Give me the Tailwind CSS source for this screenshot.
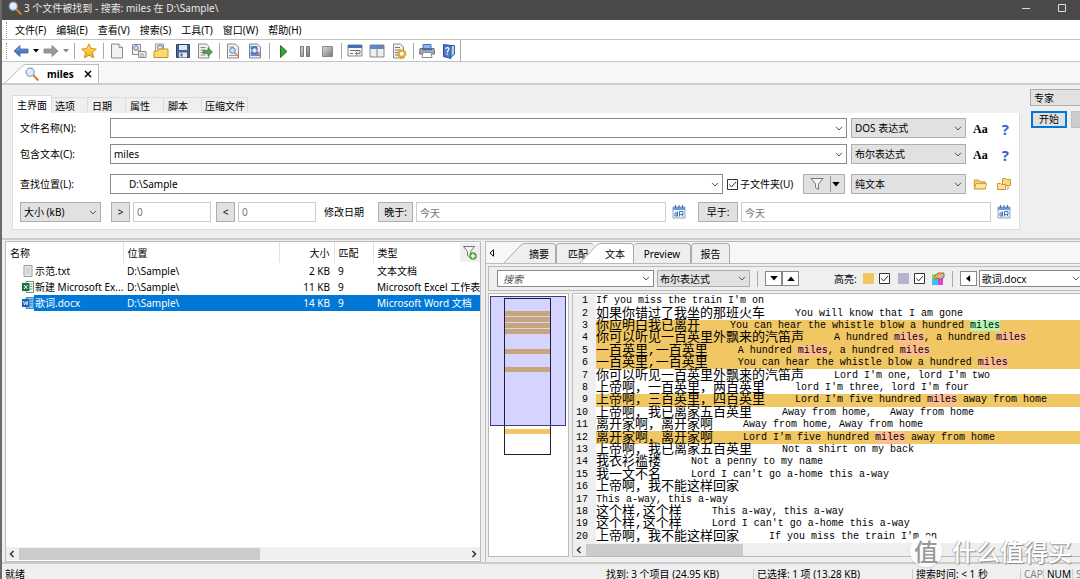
<!DOCTYPE html>
<html lang="zh-CN">
<head>
    <meta charset="UTF-8">
    <meta name="viewport" content="width=device-width, initial-scale=1.0">
    <title>搜索: miles</title>
    <script src="https://cdn.jsdelivr.net/npm/@tailwindcss/browser@4"></script>
</head>
<body class="h-screen overflow-hidden flex bg-[#efefef] text-black text-[10px] leading-[14px] font-['Noto_Sans','Noto_Sans_CJK_SC',sans-serif]">
    <!-- Shared icons -->
    <svg class="absolute size-0">
        <defs>
            <linearGradient id="blue" x1="0" y1="0" x2="0" y2="1"><stop offset="0" stop-color="#7da7e0"/><stop offset="1" stop-color="#2a57a8"/></linearGradient>
            <linearGradient id="gray" x1="0" y1="0" x2="1" y2="1"><stop offset="0" stop-color="#ddd"/><stop offset="1" stop-color="#777"/></linearGradient>
            <linearGradient id="gold" x1="0" y1="0" x2="0" y2="1"><stop offset="0" stop-color="#ffe96b"/><stop offset="1" stop-color="#f5a81c"/></linearGradient>
        </defs>
        <symbol id="chevron" viewBox="0 0 8 5"><path d="M1 .8 4 4 7 .8" fill="none" stroke="#555"/></symbol>
        <symbol id="down" viewBox="0 0 6 4"><path d="M0 0h6L3 3.6z"/></symbol>
        <symbol id="lens" viewBox="0 0 16 16">
            <path d="m9.5 9.5 5 5" stroke="#e07a2c" stroke-width="2.6" stroke-linecap="round"/>
            <circle cx="6" cy="6" r="4.6" fill="#dcebfb" stroke="#8a9fc8" stroke-width="1.4"/>
            <path d="M3.5 5.5a2.6 2.6 0 0 1 2.6-2.3" fill="none" stroke="#fff" stroke-width="1.2"/>
        </symbol>
        <symbol id="page" viewBox="0 0 16 16"><path d="M2.5 1h7.5l3.5 3.5V15h-11z" fill="#f1f1f1" stroke="#8b8b8b"/><path d="M10 1v3.5h3.5" fill="#fff" stroke="#8b8b8b"/></symbol>
        <symbol id="folder" viewBox="0 0 16 16"><path d="M1.5 13.5v-10h5l1.5 2h6v8z" fill="#f7cf62" stroke="#c08a28"/><path d="M1.5 13.5 3.5 7.5h12l-1.5 6z" fill="#fde9a2" stroke="#c99838"/></symbol>
        <symbol id="calendar" viewBox="0 0 14 14">
            <path d="M1 2h12v11H1z" fill="#eef4fb" stroke="#8ea6c4"/><path d="M1 2h12v3H1z" fill="#6c9bd8"/>
            <path d="M3.5 0v3M7 0v3M10.5 0v3" stroke="#3e6fb3"/><path d="M3 8h2v3H3zM5.500 6.500v5M7.500 11.500v-5H11v3H7.500M10 9.500l1 2" fill="none" stroke="#4b78b8"/>
        </symbol>
        <symbol id="funnel" viewBox="0 0 14 14"><path d="M1 1.500h12L8.500 7v5.500l-3-2V7z" fill="#f4f4f4" stroke="#777"/></symbol>
    </svg>

    <div class="w-0.5 shrink-0 bg-[#6a6a6a]"></div>

    <div class="flex-1 min-w-0 flex flex-col">
        <!-- Title bar -->
        <header class="h-5 shrink-0 bg-[#4c4a48] text-[#e8e8e8] flex items-center pl-1.5 pb-1">
            <svg class="size-3.5 mr-0.5"><use href="#lens"/></svg>
            <h1 class="flex-1">3 个文件被找到 - 搜索: miles 在 D:\Sample\</h1>
            <button aria-label="最小化" class="w-9 flex justify-center"><svg class="size-2.5" viewBox="0 0 10 10"><path d="M1 5.500h8" stroke="#ddd"/></svg></button>
            <button aria-label="最大化" class="w-9 flex justify-center"><svg class="size-2.5" viewBox="0 0 10 10"><path d="M1.500 1.500h7v7h-7z" fill="none" stroke="#ddd"/></svg></button>
        </header>

        <!-- Menu -->
        <nav class="h-5 shrink-0 bg-white border-b border-[#c4c4c4] flex items-center pl-1">
            <span class="h-4 border-l border-dotted border-[#999] mr-2"></span>
            <div class="flex gap-2.5">
                <button>文件(F)</button>
                <button>编辑(E)</button>
                <button>查看(V)</button>
                <button>搜索(S)</button>
                <button>工具(T)</button>
                <button>窗口(W)</button>
                <button>帮助(H)</button>
            </div>
        </nav>

        <!-- Toolbar -->
        <div class="h-[22px] shrink-0 bg-white border-b border-[#c4c4c4] flex">
            <div class="flex items-center pl-1 border-r border-[#aaa] [&>button]:flex [&>button]:justify-center [&>button]:w-[22px] [&_svg]:size-4">
                <span class="h-4 border-l border-dotted border-[#999] mr-[3px]"></span>
                <button aria-label="后退"><svg viewBox="0 0 16 16"><path d="M1 8 7 2.500V6h8v4H7v3.500z" fill="url(#blue)" stroke="#3a66ad" stroke-width=".8"/></svg></button>
                <span class="w-2 flex justify-center"><svg class="size-1.5!"><use href="#down"/></svg></span>
                <button aria-label="前进"><svg viewBox="0 0 16 16"><path d="M15 8 9 2.500V6H1v4h8v3.500z" fill="#999" stroke="#808080" stroke-width=".8"/></svg></button>
                <span class="w-2 flex justify-center"><svg class="size-1.5!" fill="#888"><use href="#down"/></svg></span>
                <span class="w-2 flex justify-center"><i class="h-4 border-l border-[#aaa]"></i></span>
                <button aria-label="收藏"><svg viewBox="0 0 16 16"><path d="m8 .8 2.200 4.700 5.100.6-3.800 3.500 1 5.200L8 12.200l-4.500 2.600 1-5.200L.7 6.100l5.100-.6z" fill="url(#gold)" stroke="#cf8412" stroke-width=".9"/></svg></button>
                <span class="w-1.5 flex justify-center"><i class="h-4 border-l border-[#aaa]"></i></span>
                <button aria-label="新建"><svg><use href="#page"/></svg></button>
                <button aria-label="新建搜索"><svg viewBox="0 0 16 16"><path d="M1.500 1.500h8v10h-8z" fill="#f4f4f4" stroke="#888"/><circle cx="5" cy="5" r="2.300" fill="#cfe2fa" stroke="#5c80b8"/><path d="m7 7 2 2" stroke="#e07a2c" stroke-width="1.500"/><path d="M7.500 8.500h7.500v6H7.500z" fill="#eee" stroke="#888"/><path d="M9 11h4M9 13h4" stroke="#999"/></svg></button>
                <button aria-label="打开"><svg viewBox="0 0 16 16"><path d="M2.500 1h8v9h-8z" fill="#eee" stroke="#999"/><circle cx="7" cy="4.500" r="2.500" fill="#cfe2fa" stroke="#5c80b8"/><path d="M1 14.500V8h4l1-2h9v8.500z" fill="#fbd970" stroke="#cc9427"/></svg></button>
                <button aria-label="保存"><svg viewBox="0 0 16 16"><path d="M1.500 1.500h13v13h-13z" fill="#4b6591" stroke="#2f456d"/><path d="M4 2h8v5H4z" fill="#dbe7f7"/><path d="M4 9.500h8v5H4z" fill="#e8e8e8"/><path d="M5.500 10.500h2v3h-2z" fill="#4b6591"/></svg></button>
                <button aria-label="导出"><svg viewBox="0 0 16 16"><path d="M1.500 1h8l2.500 2.500V15H1.500z" fill="#f3f3f3" stroke="#888"/><path d="M3.500 4.500h5M3.500 7h5M3.500 9.500h3M3.500 12h5" stroke="#888"/><path d="M6 7.500h5V4.800L15.500 9 11 13.200v-2.700H6z" fill="#4ea64a" stroke="#2f7a30" stroke-width=".7"/></svg></button>
                <span class="w-1.5 flex justify-center"><i class="h-4 border-l border-[#aaa]"></i></span>
                <button aria-label="查看文件"><svg viewBox="0 0 16 16"><path d="M2.500 1h8l3 3v11h-11z" fill="#f3f3f3" stroke="#888"/><path d="M4 4h5M4 12.500h7" stroke="#999"/><circle cx="7.500" cy="7.500" r="2.800" fill="#cfe2fa" stroke="#4f76b5"/><path d="m10 10 3 3" stroke="#e07a2c" stroke-width="1.600"/></svg></button>
                <button aria-label="查找文本"><svg viewBox="0 0 16 16"><path d="M2.500 1h8l3 3v11h-11z" fill="#e9eef6" stroke="#7b8798"/><path d="M3.500 3h7v3h-7zM3.500 9h9v4h-9z" fill="#5d88cc"/><circle cx="7.500" cy="7.500" r="2.800" fill="#dcebfb" stroke="#2c559b"/><path d="m10 10 3 3" stroke="#e07a2c" stroke-width="1.600"/></svg></button>
                <span class="w-1.5 flex justify-center"><i class="h-4 border-l border-[#aaa]"></i></span>
                <button aria-label="开始搜索"><svg viewBox="0 0 16 16"><path d="M5.500 2.500 12 8.500l-6.500 6z" fill="#3fa33a" stroke="#23771f"/></svg></button>
                <button aria-label="暂停"><svg viewBox="0 0 16 16"><path d="M3.500 3.500h3v10h-3zM9.500 3.500h3v10h-3z" fill="url(#gray)" stroke="#777"/></svg></button>
                <button aria-label="停止"><svg viewBox="0 0 16 16"><path d="M3.500 3.500h10v10h-10z" fill="url(#gray)" stroke="#888"/></svg></button>
                <span class="w-1.5 flex justify-center"><i class="h-4 border-l border-[#aaa]"></i></span>
                <button aria-label="自动换行"><svg viewBox="0 0 16 16"><path d="M1 2h14v11H1z" fill="#f6f6f6" stroke="#888"/><path d="M1 2h14v3H1z" fill="#4170b8"/><path d="M3 7.500h10M3 10.500h3M13 7.500v3H9m1.500-2L8.500 10.500l2 2" fill="none" stroke="#777"/></svg></button>
                <button aria-label="布局"><svg viewBox="0 0 16 16"><path d="M1 2h14v12H1z" fill="#eee" stroke="#888"/><path d="M1 2h14v4H1z" fill="#5a87cc"/><path d="M12 3h2v1.500h-2z" fill="#e0502c"/><path d="M8 6v8" stroke="#888"/></svg></button>
                <button aria-label="设置"><svg viewBox="0 0 16 16"><path d="M2.500 1h7l3 3v11h-10z" fill="#f3f3f3" stroke="#888"/><path d="M4 4.500h5M4 7h5M4 9.500h3M4 12h3" stroke="#777"/><circle cx="10.800" cy="10.800" r="3" fill="#fff" stroke="#e3aa25" stroke-width="2"/><circle cx="10.800" cy="10.800" r="4.400" fill="none" stroke="#cc9018" stroke-dasharray="1.700 1.750"/></svg></button>
                <span class="w-1.5 flex justify-center"><i class="h-4 border-l border-[#aaa]"></i></span>
                <button aria-label="打印"><svg viewBox="0 0 16 16"><path d="M4 1.500h8V6H4z" fill="#8fb5ec" stroke="#4a72b0"/><path d="M1 5.500h14l.5 5.500H.5z" fill="#a9adb4" stroke="#6d6d6d"/><path d="M3 6.500h10" stroke="#3867b5" stroke-width="1.500"/><path d="M4 9.500h8l1 5H3z" fill="#fff" stroke="#888"/></svg></button>
                <button aria-label="帮助"><svg viewBox="0 0 16 16"><path d="M9 2.500h4.500v9L9 14.500z" fill="#b9cbe8" stroke="#3e64a8"/><path d="M2.500 1.500 10 2.500v13l-7.500-2z" fill="#4d7ccb" stroke="#294f94"/><path d="M4.800 6.300c0-2.600 3.600-2 3 .3C7.500 7.700 6.300 7.800 6.300 9.500m0 1v1.300" fill="none" stroke="#fff" stroke-width="1.200"/></svg></button>
            </div>
        </div>

        <!-- Search tabs -->
        <div class="h-[23px] shrink-0 bg-[#f7f7f7] border-b-2 border-[#ccc] flex items-end pl-[3px]">
            <svg class="w-5 h-[19px]" viewBox="0 0 20 19"><path d="M0 19 18 1.500 20 .5V19z" fill="#fff"/><path d="M0 19 18 1.500 20 .5" fill="none" stroke="#bbb"/></svg>
            <button class="h-[19px] bg-white border-t border-r border-[#bbb] flex items-center font-bold pr-1.5">
                <svg class="size-3.5 mr-2"><use href="#lens"/></svg>miles
                <svg class="size-2 ml-2.5" viewBox="0 0 8 8"><path d="m1 1 6 6M7 1 1 7" stroke="#000" stroke-width="1.500"/></svg>
            </button>
        </div>

        <!-- Criteria -->
        <section class="shrink-0 flex pl-2.5 pt-1 pb-2">
            <div class="flex-1 min-w-0 pt-1.5">
                <div class="flex items-end">
                    <button class="h-[18px] w-10 bg-white border border-b-0 border-[#ddd]">主界面</button>
                    <button class="h-4 w-9 pl-[3px] text-left border-t border-r border-[#ddd]">选项</button>
                    <button class="h-4 w-[38px] pl-1 text-left border-t border-r border-[#ddd]">日期</button>
                    <button class="h-4 w-[38px] pl-1 text-left border-t border-r border-[#ddd]">属性</button>
                    <button class="h-4 w-[38px] pl-1 text-left border-t border-r border-[#ddd]">脚本</button>
                    <button class="h-4 w-[46px] pl-[3px] text-left border-t border-r border-[#ddd] whitespace-nowrap">压缩文件</button>
                </div>
                <form class="bg-white border border-t-0 border-[#ddd] flex flex-col pl-[7px] pr-2 pt-[5px] pb-[7px]">
                    <div class="flex items-center h-5 mb-1.5">
                        <label for="name" class="w-[90px]">文件名称(N):</label>
                        <div class="flex-1 h-5 flex items-center border border-[#8a8a8a] pr-[3px]">
                            <input id="name" type="text" class="flex-1 min-w-0 px-[3px] outline-none"><svg class="w-2 h-[5px]"><use href="#chevron"/></svg>
                        </div>
                        <div class="w-[115px] h-5 ml-1 flex items-center bg-[#e1e1e1] border border-[#adadad] pr-[3px]">
                            <select aria-label="名称表达式" class="flex-1 appearance-none pl-[3px] outline-none"><option>DOS 表达式</option></select><svg class="w-2 h-[5px]"><use href="#chevron"/></svg>
                        </div>
                        <div class="w-[45px] flex items-center justify-between pl-[7px] pr-0.5 pt-0.5">
                            <button type="button" class="font-['Liberation_Serif',serif] font-bold text-[12px]">Aa</button>
                            <button type="button" class="font-['Open_Sans',sans-serif] font-bold text-[15px] text-[#2f5fd0]">?</button>
                        </div>
                    </div>
                    <div class="flex items-center h-5 mb-2.5">
                        <label for="text" class="w-[90px]">包含文本(C):</label>
                        <div class="flex-1 h-5 flex items-center border border-[#8a8a8a] pr-[3px]">
                            <input id="text" type="text" value="miles" class="flex-1 min-w-0 px-[3px] outline-none"><svg class="w-2 h-[5px]"><use href="#chevron"/></svg>
                        </div>
                        <div class="w-[115px] h-5 ml-1 flex items-center bg-[#e1e1e1] border border-[#adadad] pr-[3px]">
                            <select aria-label="文本表达式" class="flex-1 appearance-none pl-[3px] outline-none"><option>布尔表达式</option></select><svg class="w-2 h-[5px]"><use href="#chevron"/></svg>
                        </div>
                        <div class="w-[45px] flex items-center justify-between pl-[7px] pr-0.5 pt-0.5">
                            <button type="button" class="font-['Liberation_Serif',serif] font-bold text-[12px]">Aa</button>
                            <button type="button" class="font-['Open_Sans',sans-serif] font-bold text-[15px] text-[#2f5fd0]">?</button>
                        </div>
                    </div>
                    <div class="flex items-center h-5 mb-2">
                        <label for="place" class="w-[90px]">查找位置(L):</label>
                        <div class="flex-1 h-5 flex items-center border border-[#8a8a8a] pr-[3px]">
                            <input id="place" type="text" value="D:\Sample" class="flex-1 min-w-0 pl-[18px] outline-none"><svg class="w-2 h-[5px]"><use href="#chevron"/></svg>
                        </div>
                        <label class="w-[76px] ml-1 flex items-center gap-0.5 whitespace-nowrap">
                            <input type="checkbox" checked class="sr-only">
                            <svg class="size-[11px] shrink-0" viewBox="0 0 11 11"><path d="M.5.5h10v10H.5z" fill="#fff" stroke="#333"/><path d="m2.500 5.500 2 2.500 4.500-5" fill="none" stroke="#333"/></svg>子文件夹(U)
                        </label>
                        <button type="button" aria-label="过滤" class="w-[42px] h-5 flex items-center justify-between pl-1.5 pr-1 bg-[#e1e1e1] border border-[#adadad]">
                            <svg class="size-3.5"><use href="#funnel"/></svg><i class="h-4 ml-1 border-l border-[#999]"></i><svg class="w-2 h-[5px]"><use href="#down"/></svg>
                        </button>
                        <div class="w-[115px] h-5 ml-1.5 flex items-center bg-[#e1e1e1] border border-[#adadad] pr-[3px]">
                            <select aria-label="文本类型" class="flex-1 appearance-none pl-[3px] outline-none"><option>纯文本</option></select><svg class="w-2 h-[5px]"><use href="#chevron"/></svg>
                        </div>
                        <div class="w-[45px] flex items-center justify-between pl-[7px]">
                            <button type="button" aria-label="浏览"><svg class="size-3.5"><use href="#folder"/></svg></button>
                            <button type="button" aria-label="多个文件夹"><svg class="size-3.5" viewBox="0 0 14 14"><path d="M5.500 1.500h3l1 1h4v6h-8z" fill="#f9d77a" stroke="#c99838"/><path d="M.5 6.500h3l1 1h4v5h-8z" fill="#fde39a" stroke="#c99838"/><path d="m10 10 2 .5-2.500 2.500" fill="none" stroke="#999"/></svg></button>
                        </div>
                    </div>
                    <div class="flex items-center h-5">
                        <div class="w-[81px] h-5 mr-2.5 flex items-center bg-[#e1e1e1] border border-[#adadad] pr-[3px]">
                            <select aria-label="大小单位" class="flex-1 min-w-0 appearance-none pl-[3px] outline-none"><option>大小 (kB)</option></select><svg class="w-2 h-[5px]"><use href="#chevron"/></svg>
                        </div>
                        <button type="button" class="w-[19px] h-5 bg-[#e1e1e1] border border-[#adadad]">&gt;</button>
                        <input aria-label="大于" type="text" value="0" class="w-[78px] h-5 ml-[3px] px-[3px] text-[#777] border border-[#ccc]">
                        <button type="button" class="w-[19px] h-5 ml-[5px] bg-[#e1e1e1] border border-[#adadad]">&lt;</button>
                        <input aria-label="小于" type="text" value="0" class="w-[78px] h-5 ml-[3px] px-[3px] text-[#777] border border-[#ccc]">
                        <span class="ml-2 mr-3.5">修改日期</span>
                        <button type="button" class="w-[35px] h-5 bg-[#e1e1e1] border border-[#adadad]">晚于:</button>
                        <input aria-label="晚于日期" type="text" value="今天" class="flex-1 min-w-0 h-5 ml-[3px] px-[3px] text-[#777] border border-[#ccc]">
                        <button type="button" aria-label="选择晚于日期" class="mx-1.5"><svg class="size-3.5"><use href="#calendar"/></svg></button>
                        <button type="button" class="w-10 h-5 ml-1.5 bg-[#e1e1e1] border border-[#adadad]">早于:</button>
                        <input aria-label="早于日期" type="text" value="今天" class="flex-1 min-w-0 h-5 ml-[3px] px-[3px] text-[#777] border border-[#ccc]">
                        <button type="button" aria-label="选择早于日期" class="ml-1.5"><svg class="size-3.5"><use href="#calendar"/></svg></button>
                    </div>
                </form>
            </div>
            <aside class="w-[50px] ml-2.5 shrink-0 overflow-hidden">
                <select aria-label="模式" class="appearance-none w-20 h-[17px] mb-[5px] pl-[3px] bg-[#e1e1e1] border border-[#adadad]"><option>专家</option></select>
                <div class="flex gap-1">
                    <button class="w-9 h-[17px] ml-px shrink-0 leading-[13px] bg-[#e1e1e1] border-2 border-[#0078d7]">开始</button>
                    <button aria-label="停止" class="w-9 h-[17px] shrink-0 bg-[#ccc] border border-[#bfbfbf]"></button>
                </div>
            </aside>
        </section>

        <!-- Results -->
        <main class="flex-1 min-h-0 flex gap-1 border-t-2 border-[#ccc] pt-px pl-[3px]">
            <section class="w-[476px] shrink-0 bg-white border border-[#bbb] flex flex-col">
                <table class="w-full table-fixed whitespace-nowrap border-collapse">
                    <thead>
                        <tr class="h-[21px] text-left [&>th]:font-normal [&>th]:pl-1 [&>th]:border-r [&>th]:border-[#e2e2e2]">
                            <th class="w-[117px]">名称</th>
                            <th class="w-[156px]">位置</th>
                            <th class="w-[55px] text-right pr-1">大小</th>
                            <th class="w-[39px]">匹配</th>
                            <th class="border-r-0!">
                                <div class="flex items-center justify-between">类型
                                    <button aria-label="筛选结果" class="h-[19px] w-5 bg-[#efefef] flex items-center justify-center"><svg class="size-3.5" viewBox="0 0 14 14"><path d="M.5.500h11L7.500 5.500v6l-3-2v-4z" fill="#f4f4f4" stroke="#777"/><circle cx="10" cy="10" r="3.800" fill="#57a639"/><path d="M10 7.800v4.400M7.800 10h4.400" stroke="#fff" stroke-width="1.400"/></svg></button>
                                </div>
                            </th>
                        </tr>
                    </thead>
                    <tbody class="[&_td]:pl-1 [&_tr]:h-4 [&_td:first-child]:pl-4 [&_svg]:size-3">
                        <tr>
                            <td><div class="flex items-center gap-px"><svg class="shrink-0" viewBox="0 0 12 12"><path d="M2 .5h8v11H2z" fill="#f0f0f0" stroke="#999"/><path d="M3.500 3h5M3.500 5h5M3.500 7h5M3.500 9h5" stroke="#bbb"/></svg>示范.txt</div></td>
                            <td>D:\Sample\</td><td class="text-right pr-1">2 KB</td><td>9</td><td>文本文档</td>
                        </tr>
                        <tr>
                            <td><div class="flex items-center gap-px"><svg class="shrink-0" viewBox="0 0 12 12"><path d="M4 .5h7.500v11H4z" fill="#fff" stroke="#5a9a73"/><path d="M8 3h2.500M8 5.500h2.500M8 8h2.500" stroke="#5a9a73"/><path d="M0 2h7.500v8H0z" fill="#1d7044"/><path d="m2 4 3.500 4M5.500 4 2 8" stroke="#fff"/></svg>新建 Microsoft Ex...</div></td>
                            <td>D:\Sample\</td><td class="text-right pr-1">11 KB</td><td>9</td><td>Microsoft Excel 工作表</td>
                        </tr>
                        <tr class="text-white bg-[linear-gradient(90deg,#fff_28px,#0078d7_28px)]">
                            <td><div class="flex items-center gap-px"><svg class="shrink-0" viewBox="0 0 12 12"><path d="M4 .5h7.500v11H4z" fill="#8fc3ee" stroke="#3f8fd2"/><path d="M8 3h2.500M8 5.500h2.500M8 8h2.500" stroke="#2b78bd"/><path d="M0 2h7.500v8H0z" fill="#1a62b3"/><path d="m1.500 4 1 4 1.300-3.500L5 8l1-4" fill="none" stroke="#fff" stroke-width=".8"/></svg>歌词.docx</div></td>
                            <td>D:\Sample\</td><td class="text-right pr-1">14 KB</td><td>9</td><td>Microsoft Word 文档</td>
                        </tr>
                    </tbody>
                </table>
                <div class="mt-auto h-[13px] bg-[#efefef] flex items-center px-0.5 mb-px">
                    <svg class="size-2 mr-[3px]" viewBox="0 0 8 8"><path d="M5.500 1 2.500 4l3 3" fill="none" stroke="#333" stroke-width="1.500"/></svg>
                    <div class="w-[241px] h-3 bg-[#cbcbcb]"></div>
                    <svg class="size-2 ml-auto" viewBox="0 0 8 8"><path d="m2.500 1 3 3-3 3" fill="none" stroke="#333" stroke-width="1.500"/></svg>
                </div>
            </section>

            <!-- Preview pane -->
            <section class="flex-1 min-w-0 border-l border-t border-[#bbb] flex flex-col">
                <div class="h-[22px] shrink-0 bg-[#f7f7f7] border-b border-[#bbb] flex items-end pl-0.5">
                    <button aria-label="向左" class="h-5 flex items-center mr-2"><svg class="size-2" viewBox="0 0 8 8"><path d="M5.500.8v6.400L2 4z" fill="#fff" stroke="#000"/></svg></button>
                    <svg class="w-5 h-5" viewBox="0 0 20 20"><path d="M0 20 17 2 20 .5V20z" fill="#efefef"/><path d="M0 20 17 2 20 .5" fill="none" stroke="#aaa"/></svg>
                    <button class="h-5 w-8 bg-[#efefef] border-t border-r border-[#aaa] rounded-tr-sm text-right pr-1.5">摘要</button>
                    <button class="h-5 w-[38px] bg-[#efefef] border-t border-l border-[#aaa] rounded-t-sm text-right pr-1.5">匹配</button>
                    <svg class="w-5 h-5 -ml-3.5" viewBox="0 0 20 20"><path d="M0 20 17 2 20 .5V20z" fill="#fff"/><path d="M0 20 17 2 20 .5" fill="none" stroke="#aaa"/></svg>
                    <button class="h-5 w-[34px] bg-white border-t border-r border-[#aaa] rounded-tr-sm text-right pr-2">文本</button>
                    <button class="h-5 w-[57px] bg-[#efefef] border-t border-r border-[#aaa] rounded-t-sm">Preview</button>
                    <button class="h-5 w-[39px] bg-[#efefef] border border-b-0 border-[#aaa] rounded-t-sm">报告</button>
                </div>
                <div class="h-[25px] shrink-0 mt-0.5 ml-0.5 border-l border-t border-b border-[#bbb] flex items-center pl-2 overflow-hidden">
                    <div class="w-[157px] h-[17px] shrink-0 bg-white flex items-center border border-[#8a8a8a] pr-[3px]">
                        <input aria-label="搜索" type="text" placeholder="搜索" class="flex-1 min-w-0 px-[5px] italic outline-none placeholder:text-[#555]"><svg class="w-2 h-[5px]"><use href="#chevron"/></svg>
                    </div>
                    <div class="w-[93px] h-[17px] shrink-0 ml-[3px] flex items-center bg-[#e1e1e1] border border-[#adadad] pr-[3px]">
                        <select aria-label="表达式" class="flex-1 appearance-none pl-0.5 outline-none"><option>布尔表达式</option></select><svg class="w-2 h-[5px]"><use href="#chevron"/></svg>
                    </div>
                    <i class="h-4 mx-[7px] border-l border-[#aaa]"></i>
                    <button aria-label="下一个" class="w-[17px] h-[15px] flex items-center justify-center bg-white border border-[#888]"><svg class="w-2 h-[5px]"><use href="#down"/></svg></button>
                    <button aria-label="上一个" class="w-[17px] h-[15px] flex items-center justify-center bg-white border border-[#888]"><svg class="w-2 h-[5px] rotate-180"><use href="#down"/></svg></button>
                    <span class="ml-[35px] mr-1.5 shrink-0">高亮:</span>
                    <span class="size-[11px] bg-[#f0c763]"></span>
                    <label class="ml-[5px]"><input type="checkbox" checked aria-label="高亮行" class="sr-only"><svg class="size-[11px]" viewBox="0 0 11 11"><path d="M.5.5h10v10H.5z" fill="#fff" stroke="#333"/><path d="m2.500 5.500 2 2.500 4.500-5" fill="none" stroke="#333"/></svg></label>
                    <span class="size-[11px] bg-[#b4b4cc] ml-2"></span>
                    <label class="ml-[5px]"><input type="checkbox" checked aria-label="高亮匹配" class="sr-only"><svg class="size-[11px]" viewBox="0 0 11 11"><path d="M.5.5h10v10H.5z" fill="#fff" stroke="#333"/><path d="m2.500 5.500 2 2.500 4.500-5" fill="none" stroke="#333"/></svg></label>
                    <button aria-label="颜色" class="ml-1.5"><svg class="size-3.5" viewBox="0 0 14 14"><path d="M1 2h6v5H1z" fill="#9ae03b"/><path d="M7 3h5v4H7z" fill="#4a4ad8"/><path d="M1 7h6v6H1z" fill="#34c4f2"/><path d="M7 7h5v6H7z" fill="#e83ae8"/><path d="M2.500 5.500 7 1h6v4.500L9 7.500 7 6 4 7z" fill="#e0b080" stroke="#7b5230" stroke-width=".8"/></svg></button>
                    <i class="h-4 mx-[7px] border-l border-[#aaa]"></i>
                    <button aria-label="上一文件" class="w-[17px] h-[15px] shrink-0 flex items-center justify-center bg-white border border-[#888]"><svg class="w-2 h-[5px] rotate-90"><use href="#down"/></svg></button>
                    <div class="flex-1 min-w-0 h-[17px] ml-0.5 bg-white flex items-center border-y border-l border-[#888]">
                        <select aria-label="文件" class="flex-1 min-w-0 appearance-none pl-0.5 outline-none"><option>歌词.docx</option></select><svg class="w-2 h-[5px]"><use href="#chevron"/></svg>
                    </div>
                </div>
                <div class="flex-1 min-h-0 flex gap-[3px] mt-0.5 ml-0.5 mb-[5px]">
                    <!-- Match map -->
                    <div class="w-[81px] shrink-0 bg-white border border-[#bbb] pl-px pt-0.5">
                        <svg class="w-[76px] h-[160px]" viewBox="0 0 76 160" shape-rendering="crispEdges">
                            <path d="M14 15h47v5H14zM14 21h47v5H14zM14 27h47v5H14zM14 33h47v5H14zM14 53h47v5H14zM14 71h47v5H14zM14 133h47v5H14z" fill="#f0c763"/>
                            <path d="M14.500 2.500h46v156h-46z" fill="none" stroke="#222"/>
                            <path d="M0 0h76v130H0z" fill="#0000ff" fill-opacity=".17"/>
                            <path d="M.5.500h75v129H.5z" fill="none" stroke="#3c3c78"/>
                        </svg>
                    </div>
                    <!-- Text lines -->
                    <div class="flex-1 min-w-0 bg-white border-l border-t border-b border-[#bbb] flex flex-col">
                        <ol id="lines" class="flex-1 min-h-0 grid grid-rows-[repeat(20,minmax(0,1fr))] pt-px leading-[12px] font-['Liberation_Mono','Noto_Sans_CJK_SC',monospace] whitespace-pre"></ol>
                        <div class="h-[13px] shrink-0 bg-[#efefef] flex items-center pl-0.5">
                            <svg class="size-2 mr-[3px]" viewBox="0 0 8 8"><path d="M5.500 1 2.500 4l3 3" fill="none" stroke="#333" stroke-width="1.500"/></svg>
                            <div class="w-[157px] h-3 bg-[#cbcbcb]"></div>
                        </div>
                    </div>
                </div>
            </section>
        </main>

        <!-- Status bar -->
        <footer class="h-[17px] shrink-0 border-t-2 border-[#ccc] flex items-center pl-[3px] pt-[5px] leading-[10px] whitespace-nowrap">
            <span class="flex-1">就绪</span>
            <span class="w-[147px]">找到: 3 个项目 (24.95 KB)</span>
            <span class="w-[159px] border-l border-[#ccc] pl-[3px]">已选择: 1 项 (13.28 KB)</span>
            <span class="w-[108px] border-l border-[#ccc] pl-[3px]">搜索时间: &lt; 1 秒</span>
            <span class="w-[23px] border-l border-[#ccc] pl-[3px] text-[#888]">CAP</span>
            <span class="w-[29px] border-l border-[#ccc] pl-[3px]">NUM</span>
            <span class="w-2 border-l border-[#ccc] pl-[3px] text-[#888]">S</span>
        </footer>
    </div>

    <!-- Watermark -->
    <div class="absolute right-2 bottom-3 z-10 flex items-center gap-2.5 font-['Noto_Sans_CJK_SC',sans-serif]">
        <span class="size-8 rounded-full bg-white/90 text-[#999] text-[24px] font-medium flex items-center justify-center shadow">值</span>
        <span class="text-[24px] leading-[24px] font-medium text-white [text-shadow:1px_1px_1px_#888,-1px_0_1px_#bbb]">什么值得买</span>
    </div>

    <script>
        // each row: [chinese, latin, highlighted]; *word* marks a match, +word+ the current one
        const rows = [
            ['', "If you miss the train I'm on"],
            ['如果你错过了我坐的那班火车', '     You will know that I am gone'],
            ['你应明白我已离开', '     You can hear the whistle blow a hundred +miles+', true],
            ['你可以听见一百英里外飘来的汽笛声', '     A hundred *miles*, a hundred *miles*', true],
            ['一百英里,一百英里', '     A hundred *miles*, a hundred *miles*', true],
            ['一百英里,一百英里', '     You can hear the whistle blow a hundred *miles*', true],
            ['你可以听见一百英里外飘来的汽笛声', "     Lord I'm one, lord I'm two"],
            ['上帝啊，一百英里，两百英里', "     lord I'm three, lord I'm four"],
            ['上帝啊，三百英里，四百英里', "     Lord I'm five hundred *miles* away from home", true],
            ['上帝啊，我已离家五百英里', '     Away from home,   Away from home'],
            ['离开家啊，离开家啊', '     Away from home, Away from home'],
            ['离开家啊，离开家啊', "     Lord I'm five hundred *miles* away from home", true],
            ['上帝啊，我已离家五百英里', '     Not a shirt on my back'],
            ['我衣衫褴褛', '     Not a penny to my name'],
            ['我一文不名', "     Lord I can't go a-home this a-way"],
            ['上帝啊，我不能这样回家', ''],
            ['', 'This a-way, this a-way'],
            ['这个样,这个样', '     This a-way, this a-way'],
            ['这个样,这个样', "     Lord I can't go a-home this a-way"],
            ['上帝啊，我不能这样回家', "     If you miss the train I'm on"],
        ];
        // text sits above every row's background, so a highlighted row never covers its neighbour
        document.getElementById('lines').innerHTML = rows.map(([zh, en, hit], i) => {
            const text = en
                .replace(/\*(\w+)\*/g, '<mark class="bg-[#ffbb93] text-inherit">$1</mark>')
                .replace(/\+(\w+)\+/g, '<mark class="bg-[#b5f5b5] text-inherit">$1</mark>');
            return `<li class="flex items-center min-h-0">
                <span class="w-[23px] pr-2 h-full flex items-center justify-end shrink-0 bg-[#efefef]">${i + 1}</span>
                <span class="flex-1 h-full flex items-center ${hit ? 'bg-[#f0c763]' : ''}"><span class="relative text-[13px]">${zh}</span><span class="relative">${text}</span></span>
            </li>`;
        }).join('');
    </script>
</body>
</html>
